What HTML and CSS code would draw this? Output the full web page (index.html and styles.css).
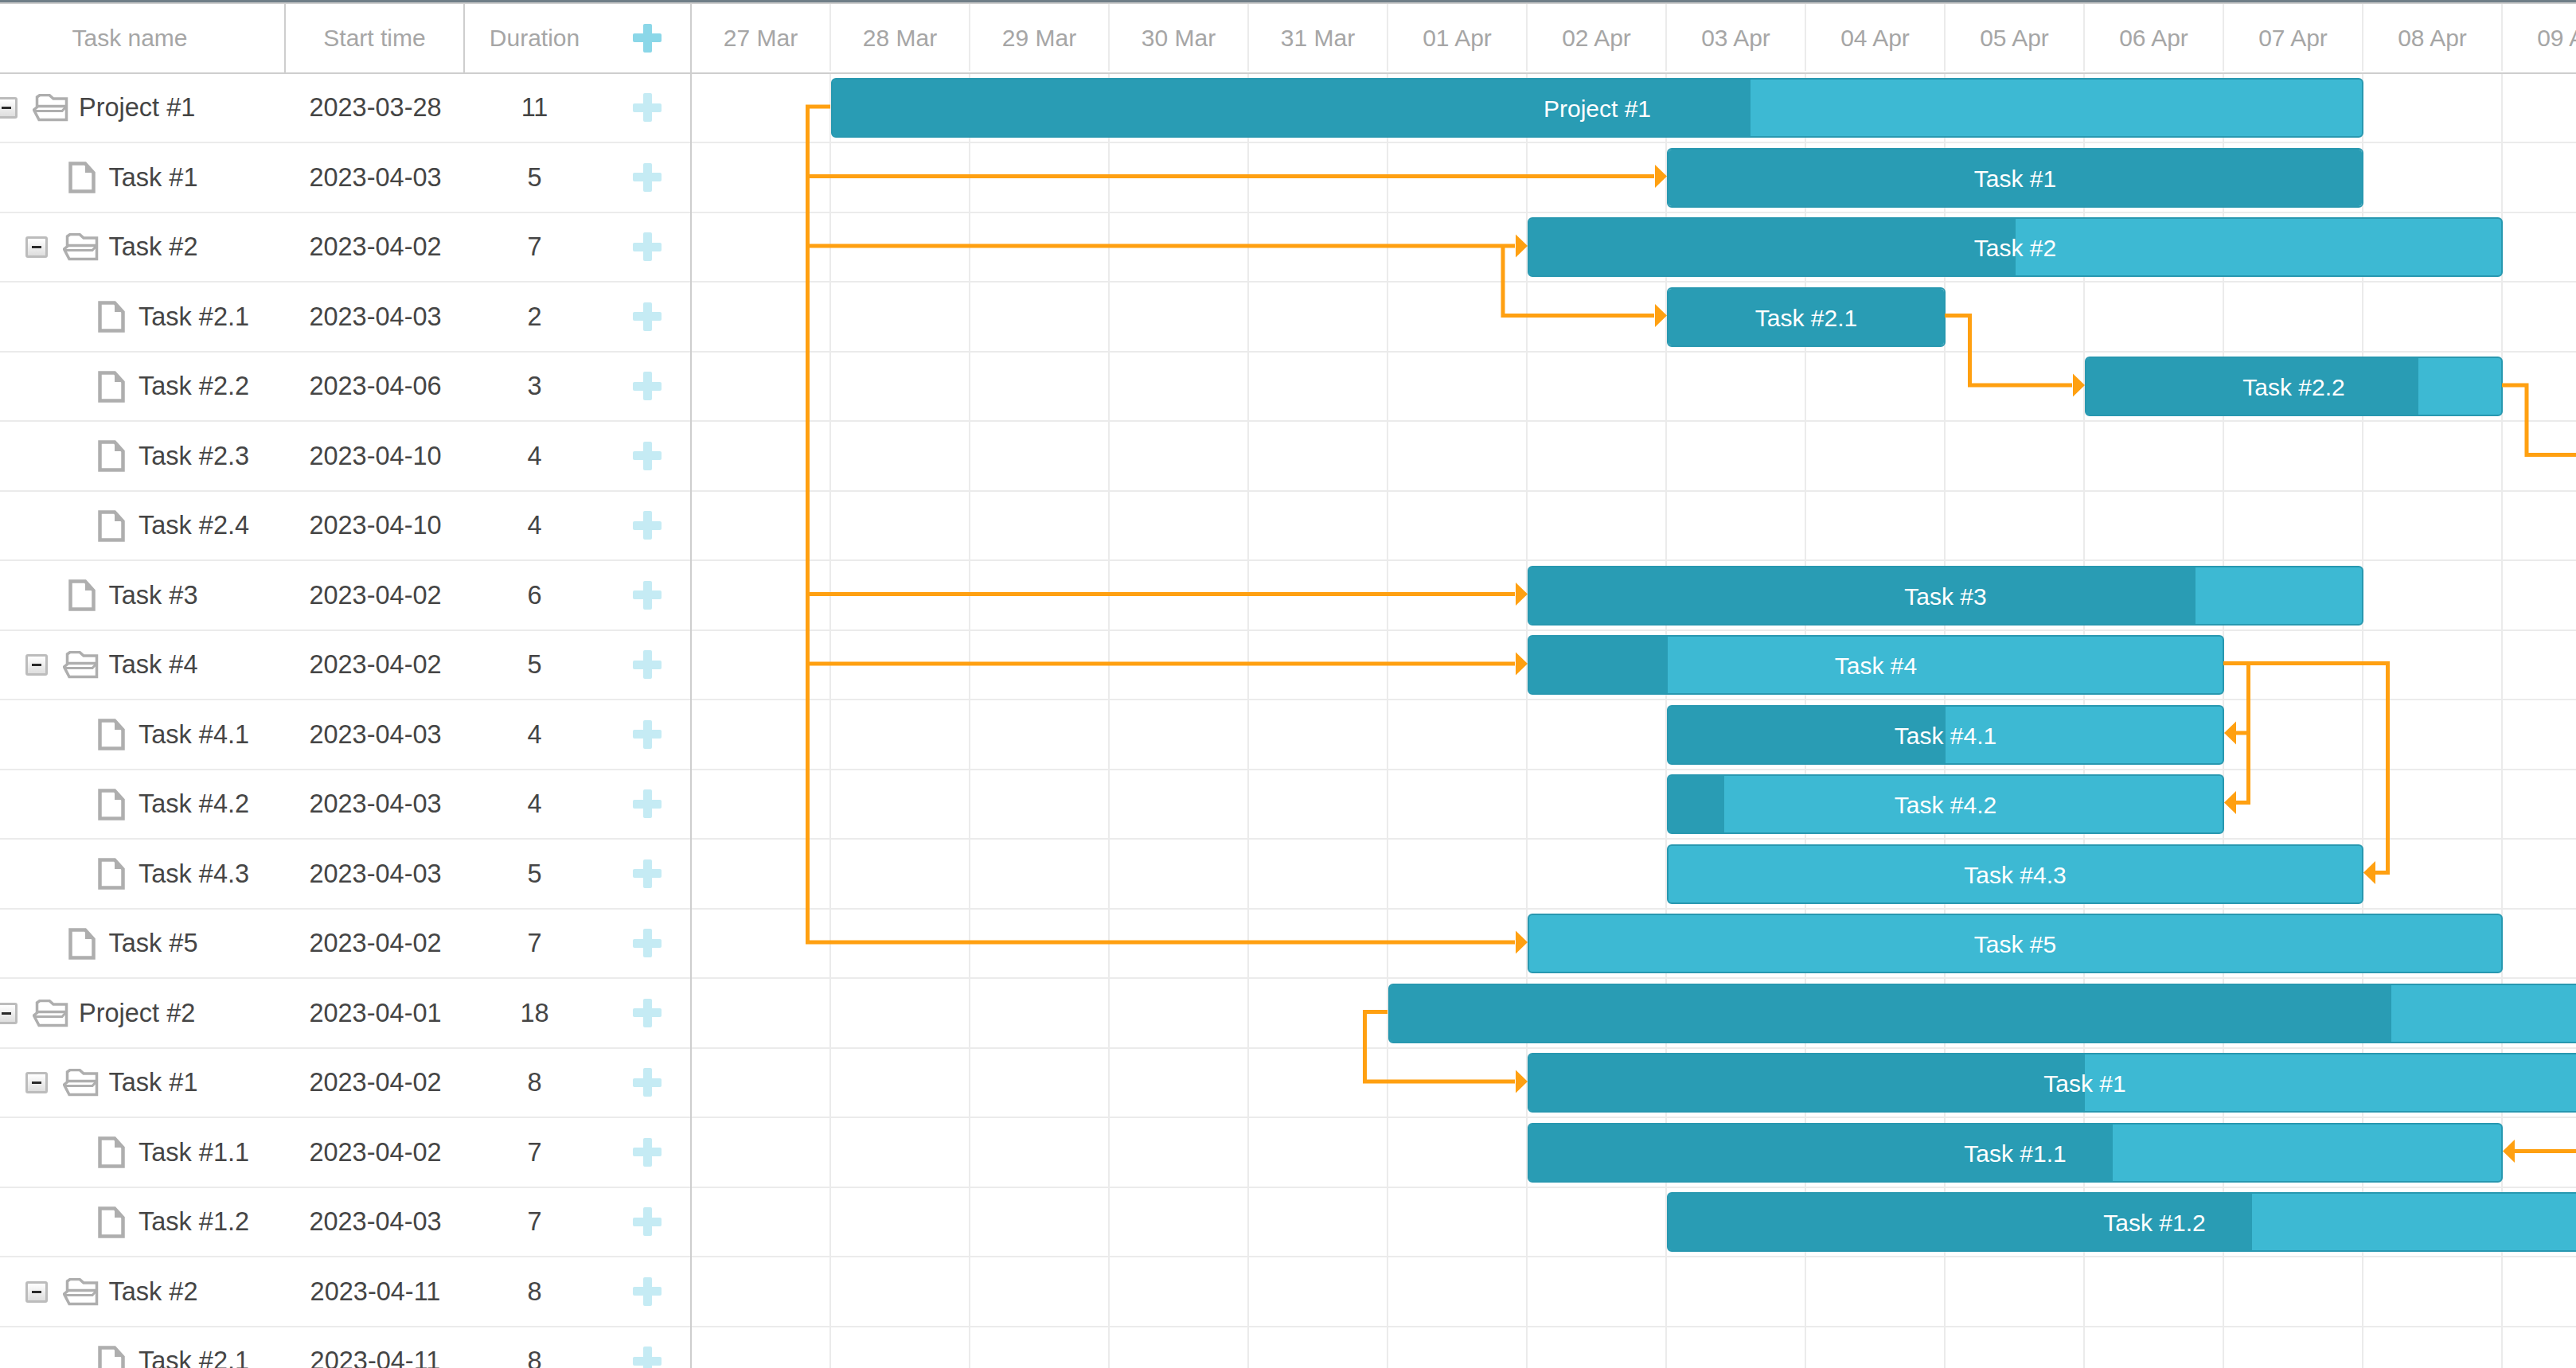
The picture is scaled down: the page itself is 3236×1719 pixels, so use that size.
FILE: index.html
```html
<!DOCTYPE html>
<html>
	<head>
		<title>Gantt</title>
		<link rel="stylesheet" href="styles.css">
	</head>
	<body>
		<svg width="0" height="0" class="defs">
			<symbol id="ico-folder" viewBox="0 0 45 35">
				<path d="M5.500 16V4L9 1.500H21L26 6H42.500V32.500H8L1.500 20L7 15.500H42" fill="none" stroke="#aeaeae" stroke-width="3.500"/>
				<path d="M3 21.500H37L42 16" fill="none" stroke="#aeaeae" stroke-width="3"/>
			</symbol>
			<symbol id="ico-file" viewBox="0 0 34 40">
				<path d="M2.500 2.500H21L31.500 14V37.500H2.500Z" fill="#fff" stroke="#aeaeae" stroke-width="4.500"/>
				<path d="M21 2.500V14H31.500Z" fill="#aeaeae"/>
			</symbol>
		</svg>

		<div class="gantt">
			<div class="grid">
				<div class="row head">
					<div class="cell name">Task name</div>
					<div class="cell start">Start time</div>
					<div class="cell dur">Duration</div>
					<div class="cell add"><span class="plus"></span></div>
				</div>

				<div class="row">
					<div class="cell name"><span class="toggle"></span><svg class="ico folder"><use href="#ico-folder"/></svg>Project #1</div>
					<div class="cell start">2023-03-28</div><div class="cell dur">11</div><div class="cell add"><span class="plus"></span></div>
				</div>
				<div class="row">
					<div class="cell name lv1"><span class="blank"></span><svg class="ico file"><use href="#ico-file"/></svg>Task #1</div>
					<div class="cell start">2023-04-03</div><div class="cell dur">5</div><div class="cell add"><span class="plus"></span></div>
				</div>
				<div class="row">
					<div class="cell name lv1"><span class="toggle"></span><svg class="ico folder"><use href="#ico-folder"/></svg>Task #2</div>
					<div class="cell start">2023-04-02</div><div class="cell dur">7</div><div class="cell add"><span class="plus"></span></div>
				</div>
				<div class="row">
					<div class="cell name lv2"><span class="blank"></span><svg class="ico file"><use href="#ico-file"/></svg>Task #2.1</div>
					<div class="cell start">2023-04-03</div><div class="cell dur">2</div><div class="cell add"><span class="plus"></span></div>
				</div>
				<div class="row">
					<div class="cell name lv2"><span class="blank"></span><svg class="ico file"><use href="#ico-file"/></svg>Task #2.2</div>
					<div class="cell start">2023-04-06</div><div class="cell dur">3</div><div class="cell add"><span class="plus"></span></div>
				</div>
				<div class="row">
					<div class="cell name lv2"><span class="blank"></span><svg class="ico file"><use href="#ico-file"/></svg>Task #2.3</div>
					<div class="cell start">2023-04-10</div><div class="cell dur">4</div><div class="cell add"><span class="plus"></span></div>
				</div>
				<div class="row">
					<div class="cell name lv2"><span class="blank"></span><svg class="ico file"><use href="#ico-file"/></svg>Task #2.4</div>
					<div class="cell start">2023-04-10</div><div class="cell dur">4</div><div class="cell add"><span class="plus"></span></div>
				</div>
				<div class="row">
					<div class="cell name lv1"><span class="blank"></span><svg class="ico file"><use href="#ico-file"/></svg>Task #3</div>
					<div class="cell start">2023-04-02</div><div class="cell dur">6</div><div class="cell add"><span class="plus"></span></div>
				</div>
				<div class="row">
					<div class="cell name lv1"><span class="toggle"></span><svg class="ico folder"><use href="#ico-folder"/></svg>Task #4</div>
					<div class="cell start">2023-04-02</div><div class="cell dur">5</div><div class="cell add"><span class="plus"></span></div>
				</div>
				<div class="row">
					<div class="cell name lv2"><span class="blank"></span><svg class="ico file"><use href="#ico-file"/></svg>Task #4.1</div>
					<div class="cell start">2023-04-03</div><div class="cell dur">4</div><div class="cell add"><span class="plus"></span></div>
				</div>
				<div class="row">
					<div class="cell name lv2"><span class="blank"></span><svg class="ico file"><use href="#ico-file"/></svg>Task #4.2</div>
					<div class="cell start">2023-04-03</div><div class="cell dur">4</div><div class="cell add"><span class="plus"></span></div>
				</div>
				<div class="row">
					<div class="cell name lv2"><span class="blank"></span><svg class="ico file"><use href="#ico-file"/></svg>Task #4.3</div>
					<div class="cell start">2023-04-03</div><div class="cell dur">5</div><div class="cell add"><span class="plus"></span></div>
				</div>
				<div class="row">
					<div class="cell name lv1"><span class="blank"></span><svg class="ico file"><use href="#ico-file"/></svg>Task #5</div>
					<div class="cell start">2023-04-02</div><div class="cell dur">7</div><div class="cell add"><span class="plus"></span></div>
				</div>
				<div class="row">
					<div class="cell name"><span class="toggle"></span><svg class="ico folder"><use href="#ico-folder"/></svg>Project #2</div>
					<div class="cell start">2023-04-01</div><div class="cell dur">18</div><div class="cell add"><span class="plus"></span></div>
				</div>
				<div class="row">
					<div class="cell name lv1"><span class="toggle"></span><svg class="ico folder"><use href="#ico-folder"/></svg>Task #1</div>
					<div class="cell start">2023-04-02</div><div class="cell dur">8</div><div class="cell add"><span class="plus"></span></div>
				</div>
				<div class="row">
					<div class="cell name lv2"><span class="blank"></span><svg class="ico file"><use href="#ico-file"/></svg>Task #1.1</div>
					<div class="cell start">2023-04-02</div><div class="cell dur">7</div><div class="cell add"><span class="plus"></span></div>
				</div>
				<div class="row">
					<div class="cell name lv2"><span class="blank"></span><svg class="ico file"><use href="#ico-file"/></svg>Task #1.2</div>
					<div class="cell start">2023-04-03</div><div class="cell dur">7</div><div class="cell add"><span class="plus"></span></div>
				</div>
				<div class="row">
					<div class="cell name lv1"><span class="toggle"></span><svg class="ico folder"><use href="#ico-folder"/></svg>Task #2</div>
					<div class="cell start">2023-04-11</div><div class="cell dur">8</div><div class="cell add"><span class="plus"></span></div>
				</div>
				<div class="row">
					<div class="cell name lv2"><span class="blank"></span><svg class="ico file"><use href="#ico-file"/></svg>Task #2.1</div>
					<div class="cell start">2023-04-11</div><div class="cell dur">8</div><div class="cell add"><span class="plus"></span></div>
				</div>
			</div>

			<div class="timeline">
				<div class="scale">
					<div class="day">27 Mar</div><div class="day">28 Mar</div><div class="day">29 Mar</div><div class="day">30 Mar</div><div class="day">31 Mar</div>
					<div class="day">01 Apr</div><div class="day">02 Apr</div><div class="day">03 Apr</div><div class="day">04 Apr</div><div class="day">05 Apr</div>
					<div class="day">06 Apr</div><div class="day">07 Apr</div><div class="day">08 Apr</div><div class="day">09 Apr</div>
				</div>

				<div class="body">
					<div class="line"><div class="bar" style="left:175px;width:1925px"><div class="done" style="width:60%"></div><span>Project #1</span></div></div>
					<div class="line"><div class="bar" style="left:1225px;width:875px"><div class="done" style="width:100%"></div><span>Task #1</span></div></div>
					<div class="line"><div class="bar" style="left:1050px;width:1225px"><div class="done" style="width:50%"></div><span>Task #2</span></div></div>
					<div class="line"><div class="bar" style="left:1225px;width:350px"><div class="done" style="width:100%"></div><span>Task #2.1</span></div></div>
					<div class="line"><div class="bar" style="left:1750px;width:525px"><div class="done" style="width:80%"></div><span>Task #2.2</span></div></div>
					<div class="line"></div>
					<div class="line"></div>
					<div class="line"><div class="bar" style="left:1050px;width:1050px"><div class="done" style="width:80%"></div><span>Task #3</span></div></div>
					<div class="line"><div class="bar" style="left:1050px;width:875px"><div class="done" style="width:20%"></div><span>Task #4</span></div></div>
					<div class="line"><div class="bar" style="left:1225px;width:700px"><div class="done" style="width:50%"></div><span>Task #4.1</span></div></div>
					<div class="line"><div class="bar" style="left:1225px;width:700px"><div class="done" style="width:10%"></div><span>Task #4.2</span></div></div>
					<div class="line"><div class="bar" style="left:1225px;width:875px"><span>Task #4.3</span></div></div>
					<div class="line"><div class="bar" style="left:1050px;width:1225px"><span>Task #5</span></div></div>
					<div class="line"><div class="bar" style="left:875px;width:3150px"><div class="done" style="width:40%"></div><span>Project #2</span></div></div>
					<div class="line"><div class="bar" style="left:1050px;width:1400px"><div class="done" style="width:50%"></div><span>Task #1</span></div></div>
					<div class="line"><div class="bar" style="left:1050px;width:1225px"><div class="done" style="width:60%"></div><span>Task #1.1</span></div></div>
					<div class="line"><div class="bar" style="left:1225px;width:1225px"><div class="done" style="width:60%"></div><span>Task #1.2</span></div></div>
					<div class="line"></div>
					<div class="line"></div>

					<!-- links, coordinates relative to the top left of the body -->
					<svg class="links" width="2368" height="1627">
						<g fill="none" stroke="#ffa011" stroke-width="5">
							<path d="M175 42H146.500V1092H1035"/>
							<path d="M146.500 129.500H1210"/>
							<path d="M146.500 217H1035"/>
							<path d="M146.500 654.500H1035"/>
							<path d="M146.500 742H1035"/>
							<path d="M1020 217V304.500H1210"/>
							<path d="M1575 304.500H1606.500V392H1735"/>
							<path d="M2275 392H2306V479.500H2368"/>
							<path d="M1925 741.500H2131.500V1004.500H2115"/>
							<path d="M1956.500 741.500V916.500H1940"/>
							<path d="M1956.500 829H1940"/>
							<path d="M875 1179.500H846.500V1267H1035"/>
							<path d="M2368 1354.500H2290"/>
						</g>
						<g fill="#ffa011">
							<path d="M1211 115L1226 129.500L1211 144Z"/>
							<path d="M1036 202.500L1051 217L1036 231.500Z"/>
							<path d="M1211 290L1226 304.500L1211 319Z"/>
							<path d="M1736 377.500L1751 392L1736 406.500Z"/>
							<path d="M1036 640L1051 654.500L1036 669Z"/>
							<path d="M1036 727.500L1051 742L1036 756.500Z"/>
							<path d="M1036 1077.500L1051 1092L1036 1106.500Z"/>
							<path d="M1036 1252.500L1051 1267L1036 1281.500Z"/>
							<path d="M1941 814.500L1926 829L1941 843.500Z"/>
							<path d="M1941 902L1926 916.500L1941 931Z"/>
							<path d="M2116 990L2101 1004.500L2116 1019Z"/>
							<path d="M2291 1340L2276 1354.500L2291 1369Z"/>
						</g>
					</svg>
				</div>
			</div>
		</div>
	</body>
</html>
```

FILE: styles.css
```css
html, body {
	margin: 0;
	height: 100%;
	overflow: hidden;
	background-color: #fff;
}

.defs {
	display: block;
	height: 0;
}

.gantt {
	display: flex;
	height: 1719px;
	margin-left: -31px;
	border-top: 3px solid #6f7e87;
	box-sizing: border-box;
	font-family: "Liberation Sans", Arial, sans-serif;
	overflow: hidden;
}

/* left side */

.grid {
	flex: none;
	width: 900px;
	box-sizing: border-box;
	border-right: 2px solid #cecece;
	border-top: 2px solid #cecece;
	font-size: 32.5px;
	color: #454545;
}

.row {
	display: flex;
	height: 87.5px;
	box-sizing: border-box;
	border-bottom: 2px solid #ebebeb;
}

.row.head {
	border-bottom: 2px solid #cecece;
	color: #a6a6a6;
	font-size: 30px;
}

.head .name, .head .start {
	border-right: 2px solid #cecece;
}

.cell {
	display: flex;
	align-items: center;
	justify-content: center;
	flex: none;
	box-sizing: border-box;
	white-space: nowrap;
}

.row:not(.head) .name, .row:not(.head) .start, .row:not(.head) .dur {
	padding-top: 1px;
}

.cell.name {
	width: 390px;
}

.row:not(.head) .name {
	justify-content: flex-start;
	padding-left: 25px;
}

.row:not(.head) .name.lv1 {
	padding-left: 62.5px;
}

.row:not(.head) .name.lv2 {
	padding-left: 100px;
}

.cell.start {
	width: 225px;
}

.cell.dur {
	width: 175px;
}

.cell.add {
	width: 108px;
}

.toggle {
	flex: none;
	position: relative;
	width: 28px;
	height: 27px;
	margin-right: 19px;
	box-sizing: border-box;
	border: 3px solid #bcbcbc;
	border-radius: 3px;
	background: linear-gradient(#fff, #dedede);
}

.toggle:after {
	content: "";
	position: absolute;
	left: 5px;
	top: 9px;
	width: 12px;
	height: 3px;
	background-color: #2a2a2a;
}

.blank {
	flex: none;
	width: 28px;
	margin-right: 26px;
}

.ico {
	flex: none;
	filter: blur(0.6px);
}

.ico.folder {
	width: 45px;
	height: 35px;
	margin-right: 13px;
}

.ico.file {
	width: 34px;
	height: 40px;
	margin-right: 17px;
}

.plus {
	position: relative;
	display: block;
	width: 36px;
	height: 36px;
}

.plus:before, .plus:after {
	content: "";
	position: absolute;
	border-radius: 2px;
	background-color: #c5ebf4;
}

.plus:before {
	left: 0;
	top: 12.5px;
	width: 36px;
	height: 11px;
}

.plus:after {
	left: 12.5px;
	top: 0;
	width: 11px;
	height: 36px;
}

.head .plus:before, .head .plus:after {
	background-color: #8bd7e8;
}

/* right side */

.timeline {
	flex: none;
	width: 2368px;
	border-top: 2px solid #cecece;
}

.scale {
	display: flex;
	height: 87.5px;
	box-sizing: border-box;
	border-bottom: 2px solid #cecece;
}

.day {
	flex: none;
	width: 175px;
	height: 83.5px;
	box-sizing: border-box;
	border-right: 2px solid #ebebeb;
	padding-top: 26px;
	text-align: center;
	font-size: 30px;
	line-height: 34px;
	color: #a6a6a6;
	white-space: nowrap;
}

.body {
	position: relative;
}

.line {
	position: relative;
	height: 87.5px;
	box-sizing: border-box;
	border-bottom: 2px solid #ebebeb;
	background-image: linear-gradient(to right, transparent 173px, #ebebeb 173px);
	background-size: 175px 100%;
}

.bar {
	position: absolute;
	top: 5.5px;
	height: 75px;
	box-sizing: border-box;
	border: 2px solid #2898b0;
	border-radius: 6px;
	background-color: #3db9d3;
	overflow: hidden;
}

.done {
	height: 100%;
	background-color: #299cb4;
}

.bar span {
	position: absolute;
	left: 0;
	right: 0;
	top: 0;
	line-height: 73px;
	text-align: center;
	font-size: 30px;
	color: #fff;
}

.links {
	position: absolute;
	left: -1px;
	top: -0.5px;
	z-index: 2;
}
```
